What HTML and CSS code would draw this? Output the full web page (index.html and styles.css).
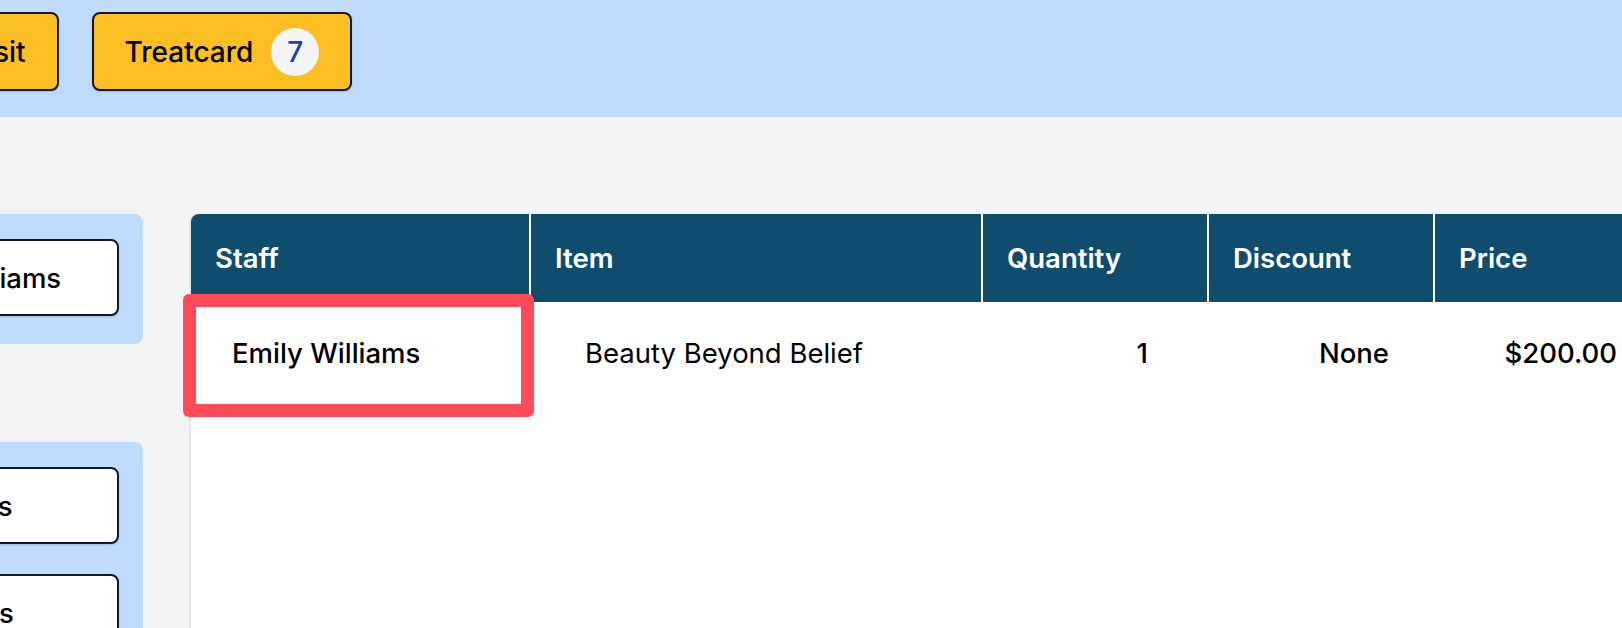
FILE: index.html
```html
<!DOCTYPE html>
<html lang="en">
<head>
<meta charset="utf-8">
<title>Checkout</title>
<link rel="stylesheet" href="styles.css">
</head>
<body>
<header class="topbar">
  <div class="topbar-inner">
    <button class="top-btn">Deposit</button>
    <button class="top-btn">Treatcard <span class="badge">7</span></button>
  </div>
</header>
<main class="main">
  <aside class="side">
    <section class="side-card">
      <button class="side-btn">Emily Williams</button>
    </section>
    <section class="side-card side-card-list">
      <button class="side-btn">Facials</button>
      <button class="side-btn">Lashes</button>
    </section>
  </aside>
  <section class="table-wrap">
    <div class="grid head">
      <div class="cell">Staff</div>
      <div class="cell">Item</div>
      <div class="cell">Quantity</div>
      <div class="cell">Discount</div>
      <div class="cell">Price</div>
    </div>
    <div class="grid row">
      <div class="cell staff">Emily Williams</div>
      <div class="cell item">Beauty Beyond Belief</div>
      <div class="cell qty">1</div>
      <div class="cell disc">None</div>
      <div class="cell price">$200.00</div>
    </div>
    <div class="highlight"></div>
  </section>
</main>
</body>
</html>
```
FILE: styles.css
```css
* { box-sizing: border-box; }
html, body { margin: 0; padding: 0; }
body {
  width: 1622px;
  height: 628px;
  overflow: hidden;
  background: #f3f4f6;
  font-family: Inter, "Noto Sans", sans-serif;
  color: #000;
}
.topbar {
  background: #bfdbfe;
  height: 117px;
  padding-top: 12px;
}
.topbar-inner {
  display: flex;
  gap: 33px;
  margin-left: -110px;
}
.top-btn {
  height: 79px;
  display: inline-flex;
  align-items: center;
  gap: 18px;
  padding: 0 31px;
  background: #fbbf24;
  border: 2px solid #111827;
  border-radius: 8px;
  box-shadow: 0 1px 2px rgba(0,0,0,0.15);
  font-family: inherit;
  font-size: 28px;
  font-weight: 500;
  color: #000;
  white-space: nowrap;
}
.badge {
  width: 48px;
  height: 48px;
  border-radius: 50%;
  background: #f3f4f6;
  color: #1e40af;
  display: inline-flex;
  align-items: center;
  justify-content: center;
  font-size: 28px;
  font-weight: 500;
}
.main {
  display: flex;
  align-items: flex-start;
  gap: 48px;
  padding-top: 97px;
  margin-left: -209px;
}
.side {
  flex: 0 0 352px;
  display: flex;
  flex-direction: column;
  gap: 98px;
}
.side-card {
  background: #bfdbfe;
  border-radius: 8px;
  padding: 25px 24px 28px;
  display: flex;
  flex-direction: column;
  gap: 30px;
}
.side-btn {
  height: 77px;
  background: #fff;
  border: 2px solid #111827;
  border-radius: 8px;
  box-shadow: 0 1px 2px rgba(0,0,0,0.15);
  font-family: inherit;
  font-size: 27.5px;
  font-weight: 500;
  color: #000;
  text-align: center;
  white-space: nowrap;
}
.table-wrap {
  position: relative;
  flex: 0 0 1470px;
  height: 420px;
  background: #fff;
  border-radius: 8px 8px 0 0;
  box-shadow: -1px 0 2px rgba(0,0,0,0.12);
}
.grid {
  display: grid;
  grid-template-columns: 338px 452px 226px 226px 228px;
}
.head {
  background: #0f4c6d;
  border-radius: 8px 8px 0 0;
  height: 88px;
}
.head .cell {
  display: flex;
  align-items: center;
  padding-left: 24px;
  color: #fff;
  font-size: 27.5px;
  font-weight: 600;
}
.head .cell + .cell { border-left: 2px solid #fff; }
.row { height: 102px; }
.row .cell {
  display: flex;
  align-items: center;
  font-size: 27.5px;
  font-weight: 500;
  white-space: nowrap;
}
.row .staff { padding-left: 41px; }
.row .item { padding-left: 56px; font-weight: 400; }
.row .qty { justify-content: flex-end; padding-right: 59px; }
.row .disc { justify-content: flex-end; padding-right: 44px; }
.row .price { justify-content: flex-end; padding-right: 44px; }
.highlight {
  position: absolute;
  left: -8px;
  top: 80px;
  width: 351px;
  height: 123px;
  border: 13px solid #ff4a5a;
  border-radius: 6px;
}
```
